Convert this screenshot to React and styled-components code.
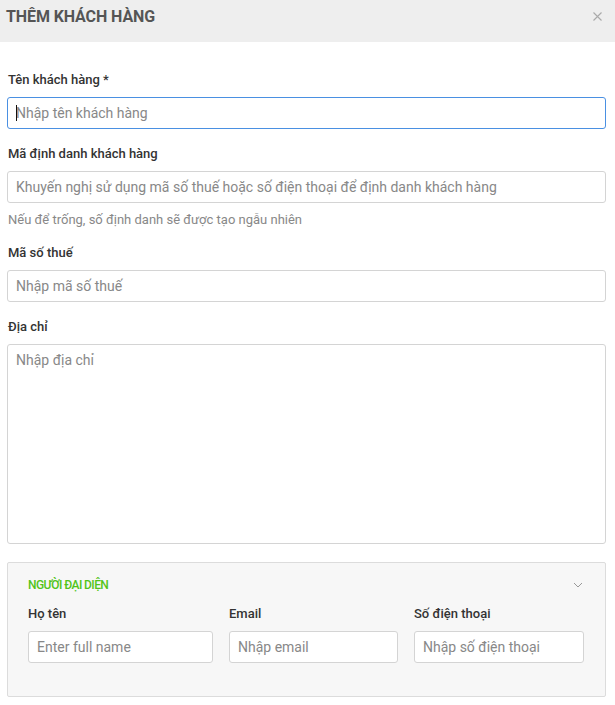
import React from "react";
import styled, { createGlobalStyle } from "styled-components";

const Global = createGlobalStyle`
  html, body { margin: 0; padding: 0; background: #fff; }
  body { font-family: Roboto, "Noto Sans", Arial, sans-serif; }
  * { box-sizing: border-box; }
`;

const Modal = styled.div`
  width: 615px;
  height: 705px;
  background: #fff;
  overflow: hidden;
`;

const Header = styled.div`
  height: 42px;
  background: #eeeeee;
  display: flex;
  align-items: center;
  justify-content: space-between;
  padding: 0 12px 0 6px;
`;

const Title = styled.h2`
  margin: 0;
  font-size: 16px;
  font-weight: 700;
  color: #555;
  letter-spacing: -0.1px;
  margin-top: -10px;
`;

const Close = styled.button`
  border: 0;
  background: transparent;
  padding: 0;
  width: 12px;
  height: 12px;
  display: flex;
  align-items: center;
  justify-content: center;
  margin-top: -10px;
  cursor: pointer;
`;

const Body = styled.div`
  padding: 29px 9px 0 7px;
  display: flex;
  flex-direction: column;
`;

const Field = styled.div`
  display: flex;
  flex-direction: column;
  margin-bottom: ${(p) => p.$mb ?? 16}px;
`;

const Label = styled.label`
  font-size: 13px;
  line-height: 18px;
  font-weight: 500;
  color: #333;
  margin: 0 0 8px 1px;
`;

const InputWrap = styled.div`
  position: relative;
`;

const Input = styled.input`
  width: 100%;
  height: 32px;
  border: 1px solid ${(p) => (p.$focused ? "#4a90e2" : "#d4d4d4")};
  border-radius: 3px;
  padding: 0 8px;
  font-family: Roboto, "Noto Sans", Arial, sans-serif;
  font-size: 14px;
  color: #333;
  background: #fff;
  outline: none;
  &::placeholder { color: #888; }
`;

const Caret = styled.span`
  position: absolute;
  left: 9px;
  top: 8px;
  width: 1px;
  height: 16px;
  background: #111;
`;

const TextArea = styled.textarea`
  width: 100%;
  height: 200px;
  border: 1px solid #d4d4d4;
  border-radius: 3px;
  padding: 6px 8px;
  font-family: Roboto, "Noto Sans", Arial, sans-serif;
  font-size: 14px;
  line-height: 18px;
  resize: none;
  outline: none;
  &::placeholder { color: #888; }
`;

const Help = styled.div`
  font-size: 13px;
  line-height: 16px;
  color: #888;
  margin: 9px 0 0 1px;
`;

const Section = styled.div`
  margin-top: 1px;
  background: #f7f7f7;
  border: 1px solid #dcdcdc;
  border-radius: 2px;
  padding: 14px 20px 33px 20px;
`;

const SectionHead = styled.div`
  display: flex;
  justify-content: space-between;
  align-items: center;
  height: 16px;
  margin-bottom: 12px;
`;

const SectionTitle = styled.div`
  font-size: 12px;
  font-weight: 500;
  color: #52c41a;
  letter-spacing: -0.6px;
`;

const Cols = styled.div`
  display: grid;
  grid-template-columns: 185px 169px 170px;
  column-gap: 16px;
`;

const Col = styled.div`
  display: flex;
  flex-direction: column;
`;

const ColLabel = styled(Label)`
  margin-left: 0;
`;

export default function App() {
  return (
    <Modal>
      <Global />
      <Header>
        <Title>THÊM KHÁCH HÀNG</Title>
        <Close aria-label="close">
          <svg width="9" height="9" viewBox="0 0 9 9">
            <path d="M0.5 0.5 L8.5 8.5 M8.5 0.5 L0.5 8.5" stroke="#aaa" strokeWidth="1.1" />
          </svg>
        </Close>
      </Header>
      <Body>
        <Field>
          <Label>Tên khách hàng *</Label>
          <InputWrap>
            <Input $focused placeholder="Nhập tên khách hàng" />
            <Caret />
          </InputWrap>
        </Field>
        <Field>
          <Label>Mã định danh khách hàng</Label>
          <Input placeholder="Khuyến nghị sử dụng mã số thuế hoặc số điện thoại để định danh khách hàng" />
          <Help>Nếu để trống, số định danh sẽ được tạo ngẫu nhiên</Help>
        </Field>
        <Field>
          <Label>Mã số thuế</Label>
          <Input placeholder="Nhập mã số thuế" />
        </Field>
        <Field $mb={17}>
          <Label>Địa chỉ</Label>
          <TextArea placeholder="Nhập địa chỉ" />
        </Field>
        <Section>
          <SectionHead>
            <SectionTitle>NGƯỜI ĐẠI DIỆN</SectionTitle>
            <svg width="10" height="6" viewBox="0 0 10 6" style={{ marginRight: 2 }}>
              <path d="M1 1 L5 5 L9 1" fill="none" stroke="#999" strokeWidth="1" />
            </svg>
          </SectionHead>
          <Cols>
            <Col>
              <ColLabel>Họ tên</ColLabel>
              <Input placeholder="Enter full name" />
            </Col>
            <Col>
              <ColLabel>Email</ColLabel>
              <Input placeholder="Nhập email" />
            </Col>
            <Col>
              <ColLabel>Số điện thoại</ColLabel>
              <Input placeholder="Nhập số điện thoại" />
            </Col>
          </Cols>
        </Section>
      </Body>
    </Modal>
  );
}
